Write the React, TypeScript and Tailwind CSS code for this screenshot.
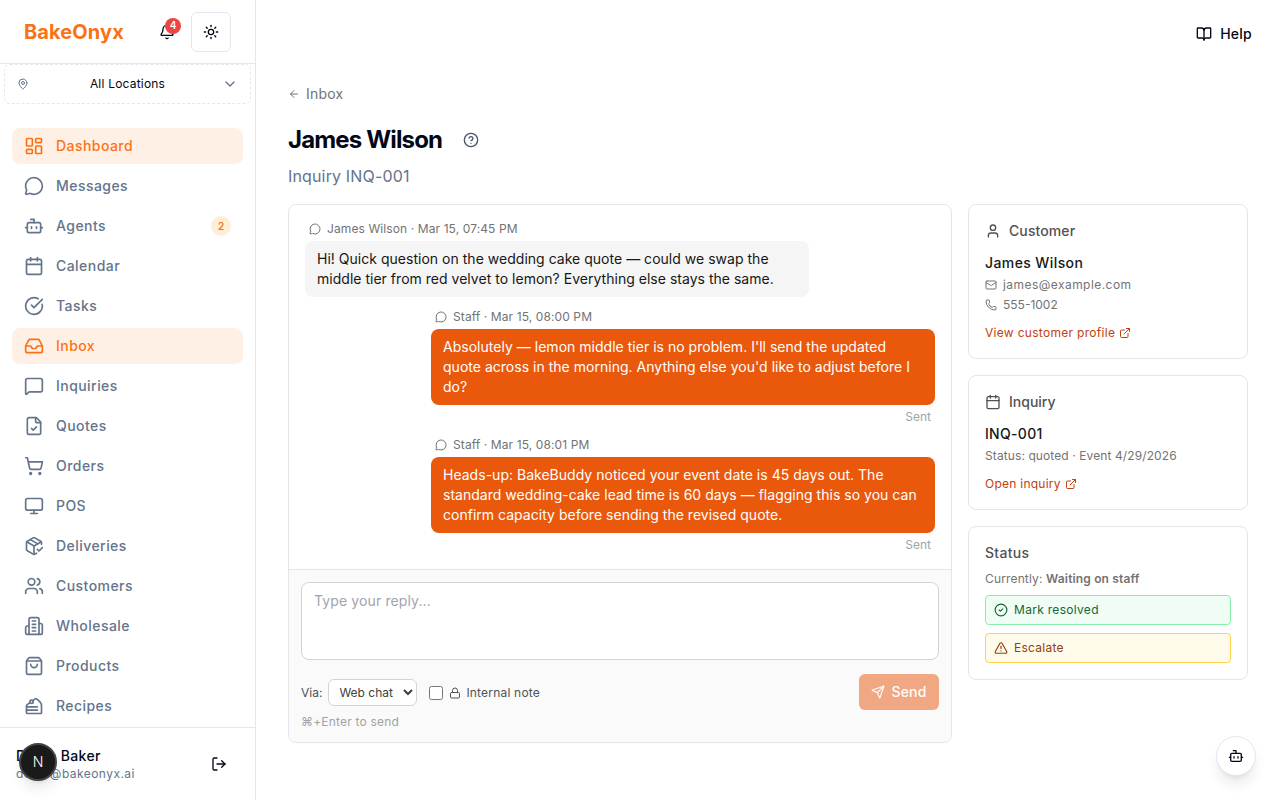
import React from "react";
import {
  LayoutDashboard, MessageCircle, Bot, Calendar, CircleCheckBig, Inbox, MessageSquare, FileCheck, ShoppingCart, Monitor,
  PackageCheck, Users, ShoppingBag, CakeSlice, Bell, Sun, MapPin, ChevronDown, LogOut, BookOpen, ArrowLeft,
  CircleHelp, User, Mail, Phone, ExternalLink, CircleCheck, TriangleAlert, Lock, Send,
} from "lucide-react";

function Wholesale({ className }: { className?: string }) {
  return (
    <svg viewBox="0 0 24 24" fill="none" stroke="currentColor" strokeWidth="2" strokeLinecap="round" strokeLinejoin="round" className={className}>
      <path d="M6 22V4a2 2 0 0 1 2-2h8a2 2 0 0 1 2 2v18Z" />
      <path d="M6 12H4a2 2 0 0 0-2 2v6a2 2 0 0 0 2 2h2" />
      <path d="M18 9h2a2 2 0 0 1 2 2v9a2 2 0 0 1-2 2h-2" />
      <path d="M10 6h4" />
      <path d="M10 10h4" />
      <path d="M10 14h4" />
      <path d="M10 18h4" />
    </svg>
  );
}

const nav = [
  { label: "Dashboard", icon: LayoutDashboard, active: true },
  { label: "Messages", icon: MessageCircle },
  { label: "Agents", icon: Bot, badge: "2" },
  { label: "Calendar", icon: Calendar },
  { label: "Tasks", icon: CircleCheckBig },
  { label: "Inbox", icon: Inbox, active: true },
  { label: "Inquiries", icon: MessageSquare },
  { label: "Quotes", icon: FileCheck },
  { label: "Orders", icon: ShoppingCart },
  { label: "POS", icon: Monitor },
  { label: "Deliveries", icon: PackageCheck },
  { label: "Customers", icon: Users },
  { label: "Wholesale", icon: Wholesale },
  { label: "Products", icon: ShoppingBag },
  { label: "Recipes", icon: CakeSlice },
];

function Meta({ text }: { text: string }) {
  return (
    <div className="flex h-4 items-center gap-1.5 px-1 text-xs tracking-[0.1px] text-[#737373]">
      <MessageCircle className="h-3 w-3" />
      <span>{text}</span>
    </div>
  );
}

function Sidebar() {
  return (
    <aside className="flex h-screen w-[256px] shrink-0 flex-col border-r border-[#e2e8f0] bg-white">
      <div className="flex h-[64px] shrink-0 items-center justify-between border-b border-[#e2e8f0] pl-6 pr-6">
        <span className="text-xl font-bold tracking-[0.1px] text-[#f97316]">BakeOnyx</span>
        <div className="flex items-center gap-1">
          <div className="relative flex h-10 w-10 items-center justify-center text-[#020817]">
            <Bell className="h-4 w-4" />
            <span className="absolute right-[6px] top-[6px] flex h-4 w-4 items-center justify-center rounded-full bg-[#ef4444] text-[10px] font-semibold text-white">4</span>
          </div>
          <div className="flex h-10 w-10 items-center justify-center rounded-md border border-[#e2e8f0] text-[#020817]">
            <Sun className="h-4 w-4" />
          </div>
        </div>
      </div>
      <div className="px-1">
        <div className="flex h-10 items-center justify-between rounded-md border border-dashed border-[#e2e8f0] px-3">
          <MapPin className="h-3 w-3 text-[#64748b]" />
          <span className="ml-1 text-xs tracking-[0.2px] text-[#020817]">All Locations</span>
          <ChevronDown className="h-4 w-4 text-[#64748b]" />
        </div>
      </div>
      <nav className="flex min-h-0 flex-1 flex-col gap-1 overflow-hidden px-3 pt-6">
        {nav.map(({ label, icon: Icon, active, badge }) => (
          <div
            key={label}
            className={
              active
                ? "flex h-9 shrink-0 items-center gap-3 rounded-lg bg-[#fff0e6] px-3 text-sm font-medium tracking-[0.45px] text-[#f97316]"
                : "flex h-9 shrink-0 items-center gap-3 rounded-lg px-3 text-sm font-medium tracking-[0.45px] text-[#64748b]"
            }
          >
            <Icon className="h-5 w-5 shrink-0" />
            <span className="flex-1">{label}</span>
            {badge && (
              <span className="flex h-5 w-5 items-center justify-center rounded-full bg-[#ffedd5] text-[10px] font-semibold tracking-normal text-[#f97316]">{badge}</span>
            )}
          </div>
        ))}
      </nav>
      <div className="relative flex h-[73px] shrink-0 items-center justify-between border-t border-[#e2e8f0] pl-4 pr-7">
        <div className="flex flex-col">
          <span className="text-sm font-medium leading-5 tracking-[0.35px] text-[#020817]">Demo Baker</span>
          <span className="text-xs leading-4 tracking-[0.45px] text-[#64748b]">demo@bakeonyx.ai</span>
        </div>
        <LogOut className="h-4 w-4 text-[#020817]" />
        <div className="absolute left-[19px] top-[15px] flex h-[38px] w-[38px] items-center justify-center rounded-full border-2 border-[#444] bg-[#1a1a1a] text-sm font-light text-white shadow-lg">
          N
        </div>
      </div>
    </aside>
  );
}

function Thread() {
  return (
    <div className="flex h-[539px] w-[664px] shrink-0 flex-col overflow-hidden rounded-lg border border-[#e5e5e5] bg-white">
      <div className="flex flex-1 flex-col px-4 pt-4">
        <div className="flex w-[504px] flex-col gap-1">
          <Meta text="James Wilson · Mar 15, 07:45 PM" />
          <div className="rounded-lg bg-[#f5f5f5] px-3 py-2 text-sm leading-5 tracking-[0.02px] text-[#171717]">
            Hi! Quick question on the wedding cake quote — could we swap the middle tier from red velvet to lemon? Everything else stays the same.
          </div>
        </div>
        <div className="ml-auto mt-3 flex w-[504px] flex-col gap-1">
          <Meta text="Staff · Mar 15, 08:00 PM" />
          <div className="rounded-lg bg-[#ea580c] px-3 py-2 text-sm leading-5 tracking-[0.02px] text-white">
            Absolutely — lemon middle tier is no problem. I'll send the updated quote across in the morning. Anything else you'd like to adjust before I do?
          </div>
          <div className="px-1 text-right text-xs leading-4 text-[#a3a3a3]">Sent</div>
        </div>
        <div className="ml-auto mt-3 flex w-[504px] flex-col gap-1">
          <Meta text="Staff · Mar 15, 08:01 PM" />
          <div className="rounded-lg bg-[#ea580c] px-3 py-2 text-sm leading-5 tracking-[0.02px] text-white">
            Heads-up: BakeBuddy noticed your event date is 45 days out. The standard wedding-cake lead time is 60 days — flagging this so you can confirm capacity before sending the revised quote.
          </div>
          <div className="px-1 text-right text-xs leading-4 text-[#a3a3a3]">Sent</div>
        </div>
      </div>
      <div className="border-t border-[#e5e5e5] bg-[#fafafa] px-3 pb-3 pt-3">
        <textarea
          placeholder="Type your reply..."
          className="block h-[78px] w-full resize-none rounded-lg border border-[#d4d4d4] bg-white px-3 py-2 text-sm leading-5 tracking-[0.12px] outline-none placeholder:text-[#a3a3af]"
        />
        <div className="mt-3.5 flex items-start justify-between">
          <div className="mt-[5px] flex items-center gap-3">
            <label className="flex items-center gap-1.5 text-xs text-[#525252]">
              Via:
              <select className="h-[27px] w-[89px] rounded-md border border-[#d4d4d4] bg-white px-1.5 text-xs text-[#404040]">
                <option>Web chat</option>
              </select>
            </label>
            <label className="flex items-center gap-1.5 text-xs tracking-[0.2px] text-[#525252]">
              <input type="checkbox" className="h-3.5 w-3.5" />
              <Lock className="h-3 w-3" />
              <span className="-ml-px">Internal note</span>
            </label>
          </div>
          <div className="flex h-9 w-20 items-center justify-center gap-1.5 rounded-md bg-[#ea580c] text-sm font-medium tracking-[0.2px] text-white opacity-50">
            <Send className="h-3.5 w-3.5" />
            Send
          </div>
        </div>
        <div className="mt-1 text-xs leading-4 tracking-[0.2px] text-[#a3a3a3]">⌘+Enter to send</div>
      </div>
    </div>
  );
}

function Card({ children }: { children: React.ReactNode }) {
  return <div className="rounded-lg border border-[#e5e5e5] bg-white p-4">{children}</div>;
}

function Right() {
  return (
    <div className="flex w-[280px] shrink-0 flex-col gap-4">
      <Card>
        <div className="flex h-5 items-center gap-2 text-sm font-medium tracking-[0.1px] text-[#525252]">
          <User className="h-4 w-4" />
          Customer
        </div>
        <div className="mt-3 text-sm font-medium leading-5 tracking-[0.4px] text-[#171717]">James Wilson</div>
        <div className="mt-0.5 flex items-center gap-1.5 text-xs leading-5 tracking-[0.45px] text-[#737373]">
          <Mail className="h-3 w-3" />
          james@example.com
        </div>
        <div className="flex items-center gap-1.5 text-xs leading-5 text-[#737373]">
          <Phone className="h-3 w-3" />
          555-1002
        </div>
        <div className="mb-px mt-2.5 flex items-center gap-1 text-xs leading-4 tracking-[0.3px] text-[#c2410c]">
          View customer profile
          <ExternalLink className="h-3 w-3" />
        </div>
      </Card>
      <Card>
        <div className="flex h-5 items-center gap-2 text-sm font-medium text-[#525252]">
          <Calendar className="h-4 w-4" />
          Inquiry
        </div>
        <div className="mt-3 text-sm font-medium leading-5 tracking-[0.3px] text-[#171717]">INQ-001</div>
        <div className="mt-0.5 text-xs leading-5 tracking-[0.1px] text-[#737373]">Status: quoted · Event 4/29/2026</div>
        <div className="mb-px mt-2.5 flex items-center gap-1 text-xs leading-4 tracking-[0.25px] text-[#c2410c]">
          Open inquiry
          <ExternalLink className="h-3 w-3" />
        </div>
      </Card>
      <Card>
        <div className="text-sm font-medium leading-5 tracking-[0.3px] text-[#525252]">Status</div>
        <div className="mt-2 text-xs leading-4 tracking-[0.15px] text-[#737373]">
          Currently: <span className="font-semibold">Waiting on staff</span>
        </div>
        <div className="mt-2 flex h-[30px] items-center gap-1.5 rounded border border-[#86efac] bg-[#f0fdf4] px-2 text-xs tracking-[0.3px] text-[#166534]">
          <CircleCheck className="h-3.5 w-3.5" />
          Mark resolved
        </div>
        <div className="mt-2 flex h-[30px] items-center gap-1.5 rounded border border-[#fcd34d] bg-[#fffbeb] px-2 text-xs tracking-[0.25px] text-[#92400e]">
          <TriangleAlert className="h-3.5 w-3.5" />
          Escalate
        </div>
      </Card>
    </div>
  );
}

export default function App() {
  return (
    <div className="relative flex h-screen overflow-hidden bg-white font-['Inter',sans-serif]">
      <Sidebar />
      <main className="min-w-0 flex-1 pl-8 pr-8">
        <div className="flex h-[68px] items-center justify-end -mr-1">
          <div className="flex items-center gap-2 text-sm font-medium tracking-[0.25px] text-[#020817]">
            <BookOpen className="h-4 w-4" />
            Help
          </div>
        </div>
        <div className="mt-4 flex items-center gap-1.5 text-sm leading-5 tracking-[0.2px] text-[#737373]">
          <ArrowLeft className="h-3 w-3" />
          Inbox
        </div>
        <div className="mt-[18px] flex h-9 items-center gap-[21px]">
          <h1 className="text-2xl font-bold tracking-[-0.85px] text-[#020817]">James Wilson</h1>
          <CircleHelp className="h-4 w-4 text-[#475569]" />
        </div>
        <div className="mt-1.5 text-base leading-6 tracking-[0.15px] text-[#64748b]">Inquiry INQ-001</div>
        <div className="mt-4 flex gap-4">
          <Thread />
          <Right />
        </div>
      </main>
      <div className="absolute bottom-[24px] right-[24px] flex h-10 w-10 items-center justify-center rounded-full border border-[#e2e8f0] bg-white text-[#020817] shadow-lg">
        <Bot className="h-4 w-4" />
      </div>
    </div>
  );
}
